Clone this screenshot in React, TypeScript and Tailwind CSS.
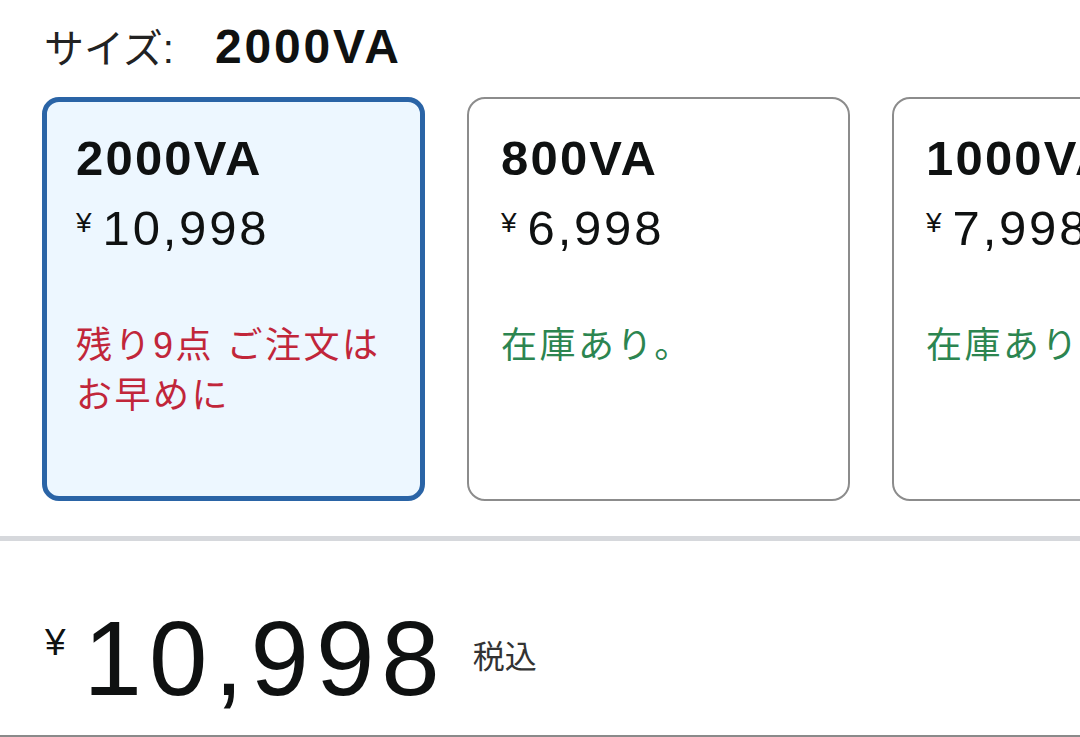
import React from "react";

const FONT = { fontFamily: '"Liberation Sans", "Noto Sans CJK JP", Arial, sans-serif' };
const CJK = { fontFamily: '"Liberation Sans", "Noto Sans CJK JP", sans-serif' };

type Opt = {
  title: string;
  price: string;
  stock: string;
  tone: "red" | "green";
  selected?: boolean;
};

const options: Opt[] = [
  { title: "2000VA", price: "10,998", stock: "残り9点 ご注文はお早めに", tone: "red", selected: true },
  { title: "800VA", price: "6,998", stock: "在庫あり。", tone: "green" },
  { title: "1000VA", price: "7,998", stock: "在庫あり。", tone: "green" },
];

function Card({ o }: { o: Opt }) {
  return (
    <div
      className={
        o.selected
          ? "w-[383px] h-[404px] shrink-0 rounded-[17px] border-[5px] border-[#2a64a6] bg-[#edf7ff] pl-[29px] pr-[20px] pt-[26px] overflow-hidden"
          : "w-[383px] h-[404px] shrink-0 rounded-[18px] border-2 border-[#8c8c8c] bg-white pl-[32px] pr-[23px] pt-[29px] overflow-hidden"
      }
    >
      <div className="text-[49px] leading-[60px] font-bold tracking-[2.2px] text-[#0f1111] whitespace-nowrap">{o.title}</div>
      <div className="mt-[9px] flex items-start whitespace-nowrap text-[#0f1111]">
        <span className="text-[28px] leading-[28px] mt-[12px] mr-[11px]">¥</span>
        <span className="text-[49px] leading-[62px] tracking-[2.8px]">{o.price}</span>
      </div>
      <div
        className={
          (o.tone === "red" ? "text-[#c1263a] " : "text-[#2c8550] ") +
          "mt-[62px] text-[36px] leading-[50px] tracking-[2.5px] w-[320px]"
        }
        style={CJK}
      >
        {o.tone === "red" ? (
          <>
            残り9点 ご注文は
            <br />
            お早めに
          </>
        ) : (
          <span className="whitespace-nowrap">{o.stock}</span>
        )}
      </div>
    </div>
  );
}

export default function App() {
  return (
    <div className="w-[1080px] h-[737px] overflow-hidden bg-white flex flex-col text-[#0f1111]" style={FONT}>
      <div className="pl-[44px] pt-[17px] text-[48px] leading-[60px] whitespace-nowrap">
        <span className="text-[40px] text-[#222]">サイズ:</span>
        <span className="ml-[41px] font-bold tracking-[2.8px]">2000VA</span>
      </div>
      <div className="mt-[18px] pl-[42px] flex gap-[42px] overflow-hidden">
        {options.map((o) => (
          <Card key={o.title} o={o} />
        ))}
      </div>
      <div className="mt-[35px] h-[5px] bg-[#d6d8dc] shrink-0" />
      <div className="flex-1 pl-[45px] pt-[65px] flex items-start whitespace-nowrap">
        <span className="text-[37px] leading-[37px] mt-[18px] mr-[18px]">¥</span>
        <span className="text-[105px] leading-[105px] tracking-[7px]">10,998</span>
        <span className="text-[32px] leading-[32px] mt-[35px] ml-[26px] text-[#333]" style={CJK}>
          税込
        </span>
      </div>
      <div className="h-[2px] bg-[#8a8a8a] shrink-0" />
    </div>
  );
}
